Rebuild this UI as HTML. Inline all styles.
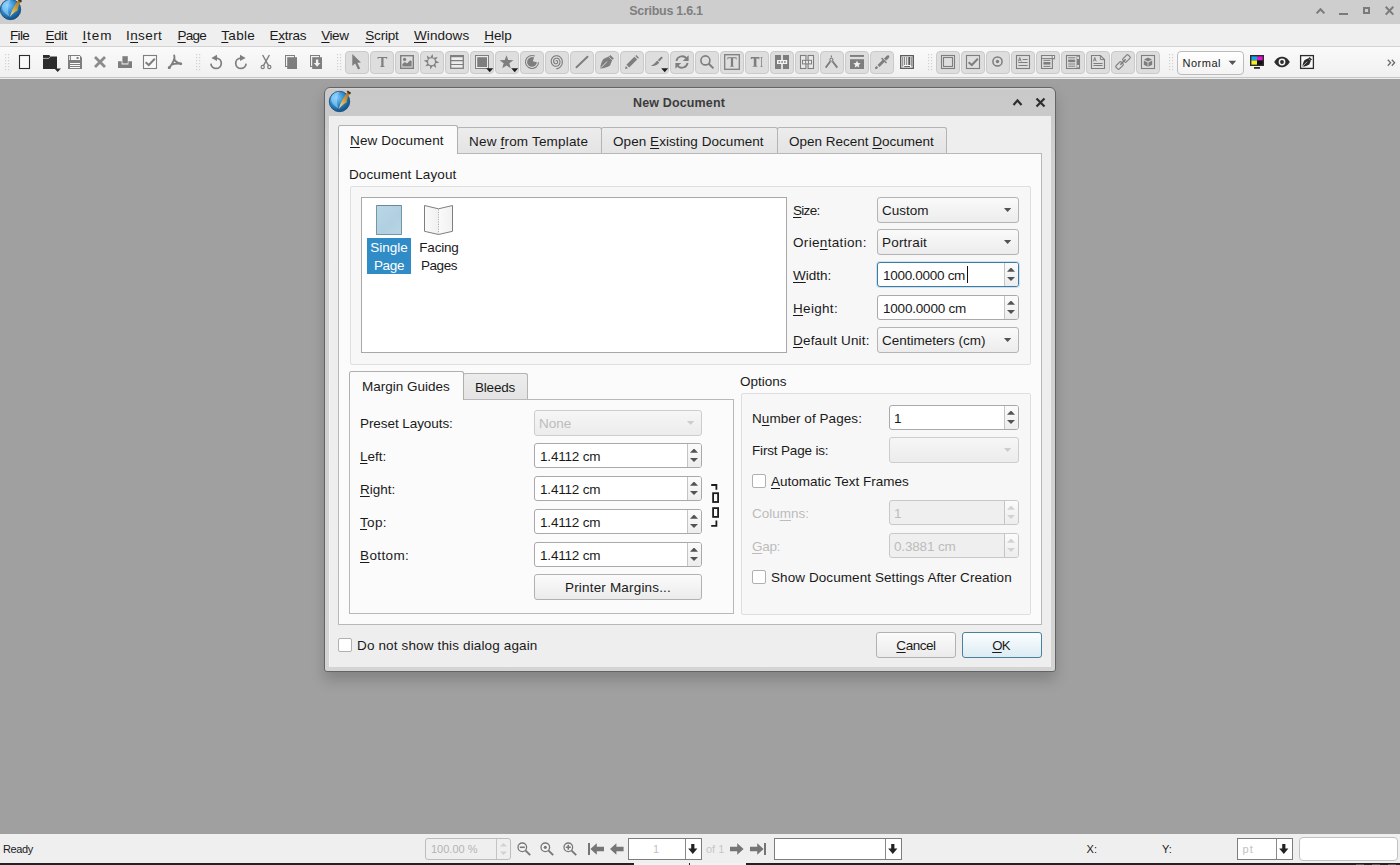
<!DOCTYPE html>
<html><head><meta charset="utf-8"><title>Scribus</title>
<style>
*{box-sizing:border-box;margin:0;padding:0}
html,body{width:1400px;height:865px;overflow:hidden}
body{position:relative;background:#a0a0a0;font-family:"Liberation Sans",sans-serif;font-size:13.5px;color:#1a1a1a}
.abs{position:absolute}
.t{position:absolute;white-space:nowrap;line-height:16px;height:16px}
u{text-decoration:underline;text-underline-offset:2px;text-decoration-thickness:1px}
#titlebar{position:absolute;left:0;top:0;width:1400px;height:24px;background:#cecece}
#menubar{position:absolute;left:0;top:24px;width:1400px;height:23px;background:#efefef;border-bottom:1px solid #d2d2d2}
#toolbar{position:absolute;left:0;top:47px;width:1400px;height:32px;background:linear-gradient(#fafafa,#f0f0f0);border-bottom:1px solid #ececec}
#toolbar:after{content:"";position:absolute;left:0;top:30px;width:1400px;height:1px;background:#c6c6c6}
.tbtn{width:24px;height:23px;border:1px solid #cacaca;border-radius:4px;background:#dedede}
#statusbar{position:absolute;left:0;top:834px;width:1400px;height:29px;background:#efefef}
#bottombar{position:absolute;left:0;top:863px;width:1400px;height:2px;background:#222}
#dialog{position:absolute;left:324px;top:87px;width:732px;height:585px;border:1px solid #646464;border-radius:6px 6px 3px 3px;background:linear-gradient(#d4d4d4,#d4d4d4 1px,#c9c9c9 2px,#cacaca 28px,#d0d0d0 60px,#d4d4d4);box-shadow:0 8px 14px rgba(0,0,0,.18)}
#dlgbody{position:absolute;left:329px;top:116px;width:722px;height:551px;background:#eeeeee;box-shadow:inset 1px 0 0 #f3f3f3}
.combo{position:absolute;height:26px;border:1px solid #b4b4b4;border-radius:3px;background:linear-gradient(#fafafa,#ececec)}
.combo .arr{position:absolute;right:6.7px;top:10px;width:7.4px;height:4.1px;background:#535353;clip-path:polygon(0 0,100% 0,50% 100%)}
.spin{position:absolute;height:25px;border:1px solid #a9a9a9;border-radius:3px;background:#fff}
.spin .sb{position:absolute;right:0;top:0;bottom:0;width:14px;border-left:1px solid #c4c4c4;background:linear-gradient(#fbfbfb,#ededed);border-radius:0 2px 2px 0}
.spin .up{position:absolute;right:3px;top:4.6px;width:8px;height:4.2px;background:#535353;clip-path:polygon(50% 0,100% 100%,0 100%)}
.spin .dn{position:absolute;right:3px;top:13.9px;width:8px;height:4.2px;background:#535353;clip-path:polygon(0 0,100% 0,50% 100%)}
.dis{color:#bcbcbc}
.cb{position:absolute;width:14px;height:14px;border:1px solid #b0b0b0;border-radius:2px;background:#fff}
.btn{position:absolute;border:1px solid #b1b1b1;border-radius:3px;background:linear-gradient(#fbfbfb,#ebebeb)}

.tab{border:1px solid #b4b4b4;border-bottom:none;border-radius:2.5px 2.5px 0 0;background:linear-gradient(#ececec,#e4e4e4)}
.tabsel{border:1px solid #b0b0b0;border-bottom:none;border-radius:2.5px 2.5px 0 0;background:#fbfbfb}
.grp{border:1px solid #dfdfdf;border-radius:2px;background:#f7f7f7}
.spin.focus{border-color:#3a7ca5;box-shadow:0 0 0 1px rgba(90,160,210,.25)}
.dcombo{border-color:#cdcdcd;background:linear-gradient(#f6f6f6,#ececec)}
.dcombo .arr{background:#cdcdcd}
.dspin{border-color:#c8c8c8;background:#efefef}
.dspin .up{background:#d2d2d2}
.dspin .dn{background:#d2d2d2}
.okbtn{border-color:#4b7f9c;background:linear-gradient(#fbfeff,#dcebf3)}
</style></head><body>
<div id="titlebar"></div>
<div id="menubar"></div>
<div id="toolbar"></div>
<div id="statusbar"></div>
<div id="bottombar"></div>
<!--CHROME-->
<div class="t" id="wtitle" style="left:566px;top:3px;width:200px;text-align:center;font-weight:bold;color:#7f7f7f;font-size:12.5px;letter-spacing:-0.28px">Scribus 1.6.1</div>
<svg class="abs" style="left:1315px;top:7px;overflow:visible" width="11" height="8" viewBox="0 0 11 8" ><path d="M1.6 6.4 L5.5 2.2 L9.4 6.4" fill="none" stroke="#7b7b7b" stroke-width="2"/></svg>
<div class="abs" style="left:1339px;top:13px;width:9px;height:2px;background:#7b7b7b"></div>
<div class="abs" style="left:1363px;top:7px;width:7px;height:7px;border:2px solid #7b7b7b"></div>
<svg class="abs" style="left:1384px;top:5px;overflow:visible" width="11" height="11" viewBox="0 0 11 11" ><path d="M1.7 1.8 L9.3 9.6 M9.3 1.8 L1.7 9.6" fill="none" stroke="#7b7b7b" stroke-width="2"/></svg>
<div class="abs" style="left:0;top:0;width:24px;height:24px;overflow:hidden" id="appic"></div>
<svg class="abs" style="left:0px;top:-2px;overflow:visible;z-index:0" width="23" height="23" viewBox="0 0 23 23"><defs><radialGradient id="gl0" cx="0.35" cy="0.3" r="0.8"><stop offset="0" stop-color="#86ccff"/><stop offset="0.45" stop-color="#348cce"/><stop offset="1" stop-color="#0b4478"/></radialGradient><linearGradient id="pn0" x1="0" y1="1" x2="1" y2="0"><stop offset="0" stop-color="#f6e7ae"/><stop offset="0.45" stop-color="#d2a544"/><stop offset="1" stop-color="#8a6222"/></linearGradient></defs><circle cx="10.5" cy="11.5" r="10.2" fill="url(#gl0)" stroke="#17507f" stroke-width="0.9"/><path d="M10.5 1.6 C7.5 7 7.2 13 9.6 18.6 C5 16 1.6 12 2 8.2 C3 4.5 6.5 2 10.5 1.6 Z" fill="#9ddcff" opacity="0.55"/><path d="M9.8 19 C11.5 13 14.5 6.5 19.2 1.2 L21.6 2.8 C19 6 17.8 9.4 17.6 12.6 C15 13.6 12.4 16 9.8 19 Z" fill="url(#pn0)"/><path d="M18.6 0.6 L22 2.8 L21 4.4 L17.8 2 Z" fill="#4a2f12"/></svg>
<svg class="abs" style="left:329px;top:90px;overflow:visible;z-index:5" width="23" height="23" viewBox="0 0 23 23"><defs><radialGradient id="gl329" cx="0.35" cy="0.3" r="0.8"><stop offset="0" stop-color="#86ccff"/><stop offset="0.45" stop-color="#348cce"/><stop offset="1" stop-color="#0b4478"/></radialGradient><linearGradient id="pn329" x1="0" y1="1" x2="1" y2="0"><stop offset="0" stop-color="#f6e7ae"/><stop offset="0.45" stop-color="#d2a544"/><stop offset="1" stop-color="#8a6222"/></linearGradient></defs><circle cx="10.5" cy="11.5" r="10.2" fill="url(#gl329)" stroke="#17507f" stroke-width="0.9"/><path d="M10.5 1.6 C7.5 7 7.2 13 9.6 18.6 C5 16 1.6 12 2 8.2 C3 4.5 6.5 2 10.5 1.6 Z" fill="#9ddcff" opacity="0.55"/><path d="M9.8 19 C11.5 13 14.5 6.5 19.2 1.2 L21.6 2.8 C19 6 17.8 9.4 17.6 12.6 C15 13.6 12.4 16 9.8 19 Z" fill="url(#pn329)"/><path d="M18.6 0.6 L22 2.8 L21 4.4 L17.8 2 Z" fill="#4a2f12"/></svg>
<div class="t" id="mFile" style="left:10px;top:28px;letter-spacing:-0.67px"><u>F</u>ile</div>
<div class="t" id="mEdit" style="left:45.4px;top:28px;letter-spacing:-0.4px"><u>E</u>dit</div>
<div class="t" id="mItem" style="left:82.4px;top:28px;letter-spacing:0.93px"><u>I</u>tem</div>
<div class="t" id="mInsert" style="left:126px;top:28px;letter-spacing:0.4px">I<u>n</u>sert</div>
<div class="t" id="mPage" style="left:177.5px;top:28px;letter-spacing:-0.73px"><u>P</u>age</div>
<div class="t" id="mTable" style="left:221.3px;top:28px;letter-spacing:0.3px"><u>T</u>able</div>
<div class="t" id="mExtras" style="left:269.5px;top:28px;letter-spacing:-0.24px">E<u>x</u>tras</div>
<div class="t" id="mView" style="left:321.3px;top:28px;letter-spacing:-0.47px"><u>V</u>iew</div>
<div class="t" id="mScript" style="left:365.3px;top:28px;letter-spacing:-0.2px"><u>S</u>cript</div>
<div class="t" id="mWindows" style="left:414px;top:28px;letter-spacing:0.07px"><u>W</u>indows</div>
<div class="t" id="mHelp" style="left:484.3px;top:28px;letter-spacing:-0.1px"><u>H</u>elp</div>
<svg class="abs" style="left:5px;top:54px;overflow:visible" width="5" height="17" viewBox="0 0 5 17" ><rect x="0" y="0" width="1.2" height="1.2" fill="#d0d0d0"/><rect x="0" y="3" width="1.2" height="1.2" fill="#d0d0d0"/><rect x="0" y="6" width="1.2" height="1.2" fill="#d0d0d0"/><rect x="0" y="9" width="1.2" height="1.2" fill="#d0d0d0"/><rect x="0" y="12" width="1.2" height="1.2" fill="#d0d0d0"/><rect x="0" y="15" width="1.2" height="1.2" fill="#d0d0d0"/><rect x="3" y="0" width="1.2" height="1.2" fill="#d0d0d0"/><rect x="3" y="3" width="1.2" height="1.2" fill="#d0d0d0"/><rect x="3" y="6" width="1.2" height="1.2" fill="#d0d0d0"/><rect x="3" y="9" width="1.2" height="1.2" fill="#d0d0d0"/><rect x="3" y="12" width="1.2" height="1.2" fill="#d0d0d0"/><rect x="3" y="15" width="1.2" height="1.2" fill="#d0d0d0"/></svg>
<svg class="abs" style="left:196px;top:54px;overflow:visible" width="5" height="17" viewBox="0 0 5 17" ><rect x="0" y="0" width="1.2" height="1.2" fill="#d0d0d0"/><rect x="0" y="3" width="1.2" height="1.2" fill="#d0d0d0"/><rect x="0" y="6" width="1.2" height="1.2" fill="#d0d0d0"/><rect x="0" y="9" width="1.2" height="1.2" fill="#d0d0d0"/><rect x="0" y="12" width="1.2" height="1.2" fill="#d0d0d0"/><rect x="0" y="15" width="1.2" height="1.2" fill="#d0d0d0"/><rect x="3" y="0" width="1.2" height="1.2" fill="#d0d0d0"/><rect x="3" y="3" width="1.2" height="1.2" fill="#d0d0d0"/><rect x="3" y="6" width="1.2" height="1.2" fill="#d0d0d0"/><rect x="3" y="9" width="1.2" height="1.2" fill="#d0d0d0"/><rect x="3" y="12" width="1.2" height="1.2" fill="#d0d0d0"/><rect x="3" y="15" width="1.2" height="1.2" fill="#d0d0d0"/></svg>
<svg class="abs" style="left:337px;top:54px;overflow:visible" width="5" height="17" viewBox="0 0 5 17" ><rect x="0" y="0" width="1.2" height="1.2" fill="#d0d0d0"/><rect x="0" y="3" width="1.2" height="1.2" fill="#d0d0d0"/><rect x="0" y="6" width="1.2" height="1.2" fill="#d0d0d0"/><rect x="0" y="9" width="1.2" height="1.2" fill="#d0d0d0"/><rect x="0" y="12" width="1.2" height="1.2" fill="#d0d0d0"/><rect x="0" y="15" width="1.2" height="1.2" fill="#d0d0d0"/><rect x="3" y="0" width="1.2" height="1.2" fill="#d0d0d0"/><rect x="3" y="3" width="1.2" height="1.2" fill="#d0d0d0"/><rect x="3" y="6" width="1.2" height="1.2" fill="#d0d0d0"/><rect x="3" y="9" width="1.2" height="1.2" fill="#d0d0d0"/><rect x="3" y="12" width="1.2" height="1.2" fill="#d0d0d0"/><rect x="3" y="15" width="1.2" height="1.2" fill="#d0d0d0"/></svg>
<svg class="abs" style="left:928px;top:54px;overflow:visible" width="5" height="17" viewBox="0 0 5 17" ><rect x="0" y="0" width="1.2" height="1.2" fill="#d0d0d0"/><rect x="0" y="3" width="1.2" height="1.2" fill="#d0d0d0"/><rect x="0" y="6" width="1.2" height="1.2" fill="#d0d0d0"/><rect x="0" y="9" width="1.2" height="1.2" fill="#d0d0d0"/><rect x="0" y="12" width="1.2" height="1.2" fill="#d0d0d0"/><rect x="0" y="15" width="1.2" height="1.2" fill="#d0d0d0"/><rect x="3" y="0" width="1.2" height="1.2" fill="#d0d0d0"/><rect x="3" y="3" width="1.2" height="1.2" fill="#d0d0d0"/><rect x="3" y="6" width="1.2" height="1.2" fill="#d0d0d0"/><rect x="3" y="9" width="1.2" height="1.2" fill="#d0d0d0"/><rect x="3" y="12" width="1.2" height="1.2" fill="#d0d0d0"/><rect x="3" y="15" width="1.2" height="1.2" fill="#d0d0d0"/></svg>
<svg class="abs" style="left:1169px;top:54px;overflow:visible" width="5" height="17" viewBox="0 0 5 17" ><rect x="0" y="0" width="1.2" height="1.2" fill="#d0d0d0"/><rect x="0" y="3" width="1.2" height="1.2" fill="#d0d0d0"/><rect x="0" y="6" width="1.2" height="1.2" fill="#d0d0d0"/><rect x="0" y="9" width="1.2" height="1.2" fill="#d0d0d0"/><rect x="0" y="12" width="1.2" height="1.2" fill="#d0d0d0"/><rect x="0" y="15" width="1.2" height="1.2" fill="#d0d0d0"/><rect x="3" y="0" width="1.2" height="1.2" fill="#d0d0d0"/><rect x="3" y="3" width="1.2" height="1.2" fill="#d0d0d0"/><rect x="3" y="6" width="1.2" height="1.2" fill="#d0d0d0"/><rect x="3" y="9" width="1.2" height="1.2" fill="#d0d0d0"/><rect x="3" y="12" width="1.2" height="1.2" fill="#d0d0d0"/><rect x="3" y="15" width="1.2" height="1.2" fill="#d0d0d0"/></svg>
<svg class="abs" style="left:17px;top:54px;overflow:visible" width="16" height="16" viewBox="0 0 16 16" ><rect x="2.5" y="1.5" width="10" height="13" fill="#fafafa" stroke="#2c2c2c" stroke-width="1.1"/></svg>
<svg class="abs" style="left:42px;top:54px;overflow:visible" width="16" height="16" viewBox="0 0 16 16" ><path d="M1 1 H7.2 L8.6 2.4 H15 V15 H1 Z" fill="#2c2c2c"/><path d="M1 4.4 H6.6 L8.6 2.4" fill="none" stroke="#e8e8e8" stroke-width="0.7"/><path d="M12.4 14.4 H19 L15.7 18 Z" fill="#2c2c2c"/></svg>
<svg class="abs" style="left:67px;top:54px;overflow:visible" width="16" height="16" viewBox="0 0 16 16" ><path d="M1 1 H12.6 L15 3.4 V15 H1 Z" fill="#7e7e7e"/><rect x="2.2" y="2" width="0.9" height="4" fill="#f6f6f6"/><rect x="4" y="2" width="9" height="4" fill="#f6f6f6"/><rect x="9.6" y="3" width="2" height="2" fill="#7e7e7e"/><rect x="3" y="9" width="10" height="1" fill="#fafafa"/><rect x="3" y="11" width="10" height="1" fill="#fafafa"/><rect x="3" y="13" width="10" height="1" fill="#fafafa"/></svg>
<svg class="abs" style="left:92px;top:54px;overflow:visible" width="16" height="16" viewBox="0 0 16 16" ><path d="M3 3 L13 13 M13 3 L3 13" fill="none" stroke="#8b8b8b" stroke-width="2.8"/></svg>
<svg class="abs" style="left:117px;top:54px;overflow:visible" width="16" height="16" viewBox="0 0 16 16" ><path d="M1 7.3 H4.6 V10.6 H11.4 V7.3 H15 V14 H1 Z" fill="#7e7e7e"/><rect x="5.4" y="2.2" width="5.4" height="7.2" fill="#7e7e7e"/></svg>
<svg class="abs" style="left:142px;top:54px;overflow:visible" width="16" height="16" viewBox="0 0 16 16" ><rect x="1.5" y="1.5" width="13" height="13" fill="#f9f9f9" stroke="#7e7e7e" stroke-width="1.1"/><path d="M3.6 8.2 L6.8 11 L12.8 4.8" fill="none" stroke="#7e7e7e" stroke-width="2"/></svg>
<svg class="abs" style="left:167px;top:54px;overflow:visible" width="16" height="16" viewBox="0 0 16 16" ><path d="M7.2 1.4 C7.8 3 7.5 4.8 6.7 6.6 C5.6 9.2 3.8 12.2 2 14 M7 5 C8.2 7.4 10 9 14.2 9.8 M4 11 C6.2 10 9 9.5 12.5 9.6" fill="none" stroke="#7e7e7e" stroke-width="1.9" stroke-linecap="round"/><circle cx="2.3" cy="13.6" r="1.5" fill="#7e7e7e"/><circle cx="13.6" cy="9.8" r="1.4" fill="#7e7e7e"/></svg>
<svg class="abs" style="left:208px;top:54px;overflow:visible" width="16" height="16" viewBox="0 0 16 16" ><path d="M8.6 4.1 A5.2 5.2 0 1 1 2.9 9.6" fill="none" stroke="#7e7e7e" stroke-width="1.7"/><path d="M3.4 3.9 L9 0.7 V7.1 Z" fill="#7e7e7e"/></svg>
<svg class="abs" style="left:233px;top:54px;overflow:visible" width="16" height="16" viewBox="0 0 16 16" ><g transform="translate(16,0) scale(-1,1)"><path d="M8.6 4.1 A5.2 5.2 0 1 1 2.9 9.6" fill="none" stroke="#7e7e7e" stroke-width="1.7"/><path d="M3.4 3.9 L9 0.7 V7.1 Z" fill="#7e7e7e"/></g></svg>
<svg class="abs" style="left:258px;top:54px;overflow:visible" width="16" height="16" viewBox="0 0 16 16" ><path d="M4.6 1 L10.4 11.4 M11.4 1 L5.6 11.4" fill="none" stroke="#7e7e7e" stroke-width="1.4"/><circle cx="4.7" cy="13" r="1.6" fill="none" stroke="#7e7e7e" stroke-width="1.2"/><circle cx="11.3" cy="13" r="1.6" fill="none" stroke="#7e7e7e" stroke-width="1.2"/></svg>
<svg class="abs" style="left:283px;top:54px;overflow:visible" width="16" height="16" viewBox="0 0 16 16" ><rect x="2.5" y="1.5" width="9" height="11" fill="#f2f2f2" stroke="#7e7e7e" stroke-width="1"/><rect x="4.2" y="3.2" width="9.8" height="11.8" fill="#7e7e7e"/></svg>
<svg class="abs" style="left:308px;top:54px;overflow:visible" width="16" height="16" viewBox="0 0 16 16" ><rect x="2.5" y="1.5" width="9" height="11" fill="#f2f2f2" stroke="#7e7e7e" stroke-width="1"/><rect x="4.2" y="3.2" width="9.8" height="11.8" fill="#7e7e7e"/><path d="M7.9 5.6 H10.3 V9 H12.4 L9.1 12.8 L5.8 9 H7.9 Z" fill="#f2f2f2"/></svg>
<div class="abs tbtn" style="left:345px;top:51px"></div>
<div class="abs tbtn" style="left:370px;top:51px"></div>
<div class="abs tbtn" style="left:395px;top:51px"></div>
<div class="abs tbtn" style="left:420px;top:51px"></div>
<div class="abs tbtn" style="left:445px;top:51px"></div>
<div class="abs tbtn" style="left:470px;top:51px"></div>
<div class="abs tbtn" style="left:495px;top:51px"></div>
<div class="abs tbtn" style="left:520px;top:51px"></div>
<div class="abs tbtn" style="left:545px;top:51px"></div>
<div class="abs tbtn" style="left:570px;top:51px"></div>
<div class="abs tbtn" style="left:595px;top:51px"></div>
<div class="abs tbtn" style="left:620px;top:51px"></div>
<div class="abs tbtn" style="left:645px;top:51px"></div>
<div class="abs tbtn" style="left:670px;top:51px"></div>
<div class="abs tbtn" style="left:695px;top:51px"></div>
<div class="abs tbtn" style="left:720px;top:51px"></div>
<div class="abs tbtn" style="left:745px;top:51px"></div>
<div class="abs tbtn" style="left:770px;top:51px"></div>
<div class="abs tbtn" style="left:795px;top:51px"></div>
<div class="abs tbtn" style="left:820px;top:51px"></div>
<div class="abs tbtn" style="left:845px;top:51px"></div>
<div class="abs tbtn" style="left:870px;top:51px"></div>
<div class="abs tbtn" style="left:936px;top:51px"></div>
<div class="abs tbtn" style="left:961px;top:51px"></div>
<div class="abs tbtn" style="left:986px;top:51px"></div>
<div class="abs tbtn" style="left:1011px;top:51px"></div>
<div class="abs tbtn" style="left:1036px;top:51px"></div>
<div class="abs tbtn" style="left:1061px;top:51px"></div>
<div class="abs tbtn" style="left:1086px;top:51px"></div>
<div class="abs tbtn" style="left:1111px;top:51px"></div>
<div class="abs tbtn" style="left:1136px;top:51px"></div>
<svg class="abs" style="left:349px;top:54px;overflow:visible" width="16" height="16" viewBox="0 0 16 16" ><path d="M3.3 0 V12 L6.2 9.6 L9 15.6 L11.2 14.6 L8.4 8.8 L12 8.4 Z" fill="#7e7e7e"/></svg>
<svg class="abs" style="left:374px;top:54px;overflow:visible" width="16" height="16" viewBox="0 0 16 16" ><path d="M3.6 3 H13.2 V5 H12.7 C12.5 4.2 12.2 4 11.4 4 H9.5 V11.6 C9.5 12.3 9.8 12.5 10.8 12.6 V13 H6 V12.6 C7 12.5 7.3 12.3 7.3 11.6 V4 H5.4 C4.6 4 4.3 4.2 4.1 5 H3.6 Z" fill="#7e7e7e"/></svg>
<svg class="abs" style="left:399px;top:54px;overflow:visible" width="16" height="16" viewBox="0 0 16 16" ><rect x="1.7" y="1.7" width="12.6" height="12.6" fill="none" stroke="#7e7e7e" stroke-width="1.4"/><circle cx="5.6" cy="5.4" r="1.6" fill="#7e7e7e"/><path d="M3.4 12.6 V10 L5.8 8 L8 9.6 L11.2 6.2 L12.6 7 V12.6 Z" fill="#7e7e7e"/></svg>
<svg class="abs" style="left:424px;top:54px;overflow:visible" width="16" height="16" viewBox="0 0 16 16" ><g transform="translate(-0.5,-0.3)"><circle cx="8" cy="8" r="4" fill="none" stroke="#7e7e7e" stroke-width="1.1"/><path d="M6.9 3.6 L9.1 0.3 L9.6 3.9 Z" fill="#7e7e7e" transform="rotate(0 8 8)"/><path d="M6.9 3.6 L9.1 0.3 L9.6 3.9 Z" fill="#7e7e7e" transform="rotate(45 8 8)"/><path d="M6.9 3.6 L9.1 0.3 L9.6 3.9 Z" fill="#7e7e7e" transform="rotate(90 8 8)"/><path d="M6.9 3.6 L9.1 0.3 L9.6 3.9 Z" fill="#7e7e7e" transform="rotate(135 8 8)"/><path d="M6.9 3.6 L9.1 0.3 L9.6 3.9 Z" fill="#7e7e7e" transform="rotate(180 8 8)"/><path d="M6.9 3.6 L9.1 0.3 L9.6 3.9 Z" fill="#7e7e7e" transform="rotate(225 8 8)"/><path d="M6.9 3.6 L9.1 0.3 L9.6 3.9 Z" fill="#7e7e7e" transform="rotate(270 8 8)"/><path d="M6.9 3.6 L9.1 0.3 L9.6 3.9 Z" fill="#7e7e7e" transform="rotate(315 8 8)"/></g></svg>
<svg class="abs" style="left:449px;top:54px;overflow:visible" width="16" height="16" viewBox="0 0 16 16" ><rect x="1.7" y="1.7" width="12.6" height="12.6" fill="#ececec" stroke="#7e7e7e" stroke-width="1.3"/><path d="M1.7 2.2 H14.3" stroke="#7e7e7e" stroke-width="2"/><path d="M1.7 6.7 H14.3 M1.7 10.5 H14.3" stroke="#7e7e7e" stroke-width="1.2"/></svg>
<svg class="abs" style="left:474px;top:54px;overflow:visible" width="16" height="16" viewBox="0 0 16 16" ><rect x="1.5" y="1.5" width="13" height="13" fill="#ebebeb" stroke="#7e7e7e" stroke-width="1"/><rect x="3.2" y="3.2" width="9.8" height="9.8" fill="#7e7e7e"/><path d="M12.2 14.2 H19.2 L15.7 18.2 Z" fill="#1e1e1e"/></svg>
<svg class="abs" style="left:499px;top:54px;overflow:visible" width="16" height="16" viewBox="0 0 16 16" ><polygon points="7.50,1.20 9.26,5.97 14.35,6.18 10.35,9.33 11.73,14.22 7.50,11.40 3.27,14.22 4.65,9.33 0.65,6.18 5.74,5.97" fill="#7e7e7e"/><path d="M12.2 14.2 H19.2 L15.7 18.2 Z" fill="#1e1e1e"/></svg>
<svg class="abs" style="left:524px;top:54px;overflow:visible" width="16" height="16" viewBox="0 0 16 16" ><path d="M10.8 2.1 A6.5 6.5 0 1 0 14.5 8.2" fill="none" stroke="#7e7e7e" stroke-width="1.1"/><path d="M8.8 7.2 L10.1 3.5 A4.9 4.9 0 1 0 12.9 8.2 Z" fill="#7e7e7e"/></svg>
<svg class="abs" style="left:549px;top:54px;overflow:visible" width="16" height="16" viewBox="0 0 16 16" ><polyline points="6.85,7.09 6.89,6.99 6.96,6.90 7.04,6.82 7.13,6.75 7.24,6.70 7.37,6.66 7.50,6.64 7.65,6.64 7.79,6.67 7.94,6.73 8.09,6.81 8.22,6.91 8.35,7.04 8.46,7.20 8.55,7.37 8.61,7.57 8.65,7.78 8.67,8.00 8.65,8.23 8.60,8.46 8.52,8.68 8.40,8.90 8.25,9.11 8.08,9.29 7.87,9.45 7.64,9.58 7.39,9.68 7.12,9.74 6.83,9.76 6.54,9.74 6.25,9.68 5.97,9.57 5.69,9.41 5.44,9.21 5.20,8.97 5.00,8.70 4.83,8.39 4.70,8.05 4.62,7.69 4.58,7.31 4.59,6.92 4.66,6.53 4.77,6.15 4.94,5.78 5.16,5.44 5.42,5.12 5.73,4.84 6.08,4.60 6.46,4.42 6.87,4.29 7.30,4.22 7.74,4.21 8.19,4.27 8.62,4.39 9.05,4.58 9.45,4.83 9.82,5.15 10.16,5.52 10.44,5.94 10.67,6.40 10.84,6.91 10.95,7.43 10.99,7.98 10.95,8.53 10.84,9.08 10.67,9.62 10.42,10.13 10.10,10.61 9.72,11.04 9.28,11.42 8.79,11.73 8.26,11.97 7.70,12.14 7.11,12.22 6.51,12.22 5.91,12.13 5.32,11.95 4.75,11.69 4.22,11.34 3.73,10.91 3.30,10.41 2.93,9.85 2.63,9.23 2.42,8.57 2.29,7.87 2.25,7.16 2.30,6.44 2.44,5.73 2.68,5.03 3.01,4.38 3.43,3.77 3.92,3.22 4.49,2.74 5.12,2.34 5.79,2.04 6.51,1.84 7.26,1.74 8.02,1.75 8.77,1.87 9.51,2.10 10.22,2.43 10.89,2.88 11.50,3.41 12.03,4.04 12.49,4.74 12.86,5.51 13.12,6.33 13.28,7.19 13.32,8.08 13.26,8.96 13.07,9.84 12.78,10.69 12.37,11.50 11.86,12.24 11.26,12.91 10.57,13.49 9.80,13.97 8.97,14.34 8.10,14.58 7.20,14.70" fill="none" stroke="#7e7e7e" stroke-width="1.15"/></svg>
<svg class="abs" style="left:574px;top:54px;overflow:visible" width="16" height="16" viewBox="0 0 16 16" ><path d="M2.5 13.3 L13.5 2.7" fill="none" stroke="#7e7e7e" stroke-width="1.9" stroke-linecap="round"/></svg>
<svg class="abs" style="left:599px;top:54px;overflow:visible" width="16" height="16" viewBox="0 0 16 16" ><path d="M1.2 14.4 C1.5 10.6 2.6 7.4 4.4 5 L10.2 2.3 L11.3 0.9 L14.9 4.5 L13.5 5.6 L11 11.4 C8.4 13.2 5.2 14.2 1.2 14.4 Z" fill="#7e7e7e"/><path d="M1.8 13.8 L8 7.6" stroke="#e4e4e4" stroke-width="0.9"/><path d="M10.1 3.1 L12.9 5.9" stroke="#e4e4e4" stroke-width="0.7"/></svg>
<svg class="abs" style="left:624px;top:54px;overflow:visible" width="16" height="16" viewBox="0 0 16 16" ><path d="M2.4 10.8 L10.4 2.8 L13.2 5.6 L5.2 13.6 Z" fill="#7e7e7e"/><path d="M11.3 2 L12.3 1 L15 3.7 L14 4.7 Z" fill="#7e7e7e"/><path d="M1 15 L1.7 11.9 L4.1 14.3 Z" fill="#7e7e7e"/></svg>
<svg class="abs" style="left:649px;top:54px;overflow:visible" width="16" height="16" viewBox="0 0 16 16" ><path d="M2 11.8 C4.5 10.6 6.6 8.8 8.2 6.6 L10.2 8.4 C8.6 11 5.2 12.6 2 11.8 Z" fill="#7e7e7e"/><path d="M8.9 6.1 L12.4 2.4 L13.9 3.8 L10.3 7.5 Z" fill="#7e7e7e"/><path d="M12.2 14.2 H19.2 L15.7 18.2 Z" fill="#1e1e1e"/></svg>
<svg class="abs" style="left:674px;top:54px;overflow:visible" width="16" height="16" viewBox="0 0 16 16" ><path d="M2.4 7 A5.8 5.8 0 0 1 12.4 4.2" fill="none" stroke="#7e7e7e" stroke-width="1.8"/><path d="M14.6 1.2 V7 H8.8 Z" fill="#7e7e7e"/><path d="M13.6 9 A5.8 5.8 0 0 1 3.6 11.8" fill="none" stroke="#7e7e7e" stroke-width="1.8"/><path d="M1.4 14.8 V9 H7.2 Z" fill="#7e7e7e"/></svg>
<svg class="abs" style="left:699px;top:54px;overflow:visible" width="16" height="16" viewBox="0 0 16 16" ><circle cx="6.4" cy="6.4" r="4.5" fill="none" stroke="#7e7e7e" stroke-width="1.6"/><path d="M9.8 9.8 L14.4 14.4" stroke="#7e7e7e" stroke-width="2"/></svg>
<svg class="abs" style="left:724px;top:54px;overflow:visible" width="16" height="16" viewBox="0 0 16 16" ><rect x="0.7" y="0.7" width="14.6" height="14.6" fill="none" stroke="#7e7e7e" stroke-width="1.3"/><path d="M3.4 3.2 H12.6 V5.4 H12.1 C11.9 4.5 11.6 4.3 10.8 4.3 H9.1 V11.4 C9.1 12.1 9.4 12.3 10.4 12.4 V12.8 H5.6 V12.4 C6.6 12.3 6.9 12.1 6.9 11.4 V4.3 H5.2 C4.4 4.3 4.1 4.5 3.9 5.4 H3.4 Z" fill="#7e7e7e"/></svg>
<svg class="abs" style="left:749px;top:54px;overflow:visible" width="16" height="16" viewBox="0 0 16 16" ><path d="M1.8 3.1 H10.4 V5.3 H9.9 C9.7 4.6 9.4 4.4 8.7 4.4 H7.4 V11.2 C7.4 11.9 7.7 12.2 8.6 12.3 V12.8 H3.6 V12.3 C4.5 12.2 4.8 11.9 4.8 11.2 V4.4 H3.5 C2.8 4.4 2.5 4.6 2.3 5.3 H1.8 Z" fill="#7e7e7e"/><path d="M12.5 3.3 V12.9 M11.5 3.5 H13.5 M11.5 12.5 H13.5" stroke="#8c8c8c" stroke-width="0.9" fill="none"/></svg>
<svg class="abs" style="left:774px;top:54px;overflow:visible" width="16" height="16" viewBox="0 0 16 16" ><rect x="1" y="1" width="6" height="14" fill="#7e7e7e"/><rect x="9" y="1" width="6" height="14" fill="#7e7e7e"/><rect x="3" y="6" width="10.2" height="4" fill="#f4f4f4"/><rect x="4.5" y="7.2" width="1.6" height="1.6" fill="#7e7e7e"/><rect x="7.3" y="7.2" width="1.6" height="1.6" fill="#7e7e7e"/><rect x="10.1" y="7.2" width="1.6" height="1.6" fill="#7e7e7e"/></svg>
<svg class="abs" style="left:799px;top:54px;overflow:visible" width="16" height="16" viewBox="0 0 16 16" ><rect x="1.5" y="1.5" width="5.4" height="13" fill="#e8e8e8" stroke="#7e7e7e" stroke-width="1.1"/><rect x="9.1" y="1.5" width="5.4" height="13" fill="#e8e8e8" stroke="#7e7e7e" stroke-width="1.1"/><rect x="3.5" y="6.3" width="9" height="3.6" fill="#ececec" stroke="#7e7e7e" stroke-width="1"/><path d="M6.6 6.3 V9.9 M9.4 6.3 V9.9" stroke="#7e7e7e" stroke-width="1"/></svg>
<svg class="abs" style="left:824px;top:54px;overflow:visible" width="16" height="16" viewBox="0 0 16 16" ><path d="M6.3 7.4 L1.7 13.6 M8.5 7.4 L13.3 13.6" stroke="#7e7e7e" stroke-width="1.8" fill="none"/><circle cx="7.4" cy="5.8" r="1.5" fill="#e4e4e4" stroke="#7e7e7e" stroke-width="1.1"/><path d="M7.4 1.4 V3.6" stroke="#7e7e7e" stroke-width="1.2"/></svg>
<svg class="abs" style="left:849px;top:54px;overflow:visible" width="16" height="16" viewBox="0 0 16 16" ><rect x="1" y="1" width="14" height="1.9" fill="#7e7e7e"/><rect x="1" y="5.2" width="14" height="9.8" fill="#7e7e7e"/><polygon points="8.00,6.50 9.06,8.94 11.71,9.19 9.71,10.96 10.29,13.56 8.00,12.20 5.71,13.56 6.29,10.96 4.29,9.19 6.94,8.94" fill="#f0f0f0"/></svg>
<svg class="abs" style="left:874px;top:54px;overflow:visible" width="16" height="16" viewBox="0 0 16 16" ><path d="M1.1 14.9 V13.2 L2.5 11.9 L4.1 13.5 L2.8 14.9 Z" fill="#7e7e7e"/><path d="M3.5 11.1 L9 5.6 L11 7.6 L5.5 13.1 Z" fill="#7e7e7e"/><path d="M7 4.4 L8 3.4 L13 8.4 L12 9.4 Z" fill="#7e7e7e"/><path d="M10 4.6 L12.6 2 C13.4 1.2 14.4 1.2 15 1.8 C15.6 2.4 15.4 3.4 14.6 4.2 L12 6.8 Z" fill="#7e7e7e"/></svg>
<svg class="abs" style="left:899px;top:54px;overflow:visible" width="16" height="16" viewBox="0 0 16 16" ><rect x="1.7" y="1.7" width="12.6" height="12.6" fill="#fbfbfb" stroke="#555" stroke-width="1.3"/><rect x="3.4" y="3" width="0.8" height="9.6" fill="#555"/><rect x="5.3" y="3" width="0.8" height="8" fill="#555"/><rect x="7.4" y="3" width="0.8" height="8" fill="#555"/><rect x="9.3" y="3" width="2" height="8" fill="#555"/><rect x="12.4" y="3" width="0.8" height="9.6" fill="#555"/><rect x="5.2" y="12" width="5.8" height="0.9" fill="#555"/></svg>
<svg class="abs" style="left:940px;top:54px;overflow:visible" width="16" height="16" viewBox="0 0 16 16" ><rect x="1.5" y="1.5" width="13" height="13" fill="none" stroke="#7e7e7e" stroke-width="1.1"/><rect x="3.5" y="3.5" width="9" height="9" fill="none" stroke="#7e7e7e" stroke-width="1.1"/></svg>
<svg class="abs" style="left:965px;top:54px;overflow:visible" width="16" height="16" viewBox="0 0 16 16" ><rect x="1.5" y="1.5" width="13" height="13" fill="none" stroke="#7e7e7e" stroke-width="1.1"/><path d="M3.6 8.2 L6.8 11 L12.8 4.8" fill="none" stroke="#7e7e7e" stroke-width="2"/></svg>
<svg class="abs" style="left:990px;top:54px;overflow:visible" width="16" height="16" viewBox="0 0 16 16" ><circle cx="7.5" cy="7.5" r="4.6" fill="none" stroke="#7e7e7e" stroke-width="1.5"/><circle cx="7.5" cy="7.5" r="1.7" fill="#7e7e7e"/></svg>
<svg class="abs" style="left:1015px;top:54px;overflow:visible" width="16" height="16" viewBox="0 0 16 16" ><rect x="1.5" y="1.5" width="13" height="13" fill="none" stroke="#7e7e7e" stroke-width="1.1"/><path d="M3.4 7.4 L4.8 3.4 L6.2 7.4 M3.9 6 H5.7" fill="none" stroke="#7e7e7e" stroke-width="0.9"/><path d="M7.6 5.5 H12.6 M3.4 8.5 H12.6 M3.4 11.5 H12.6" stroke="#7e7e7e" stroke-width="1"/></svg>
<svg class="abs" style="left:1040px;top:54px;overflow:visible" width="16" height="16" viewBox="0 0 16 16" ><path d="M1.5 1.5 H14.5 V4.6 H12.4 V14.5 H1.5 Z" fill="none" stroke="#7e7e7e" stroke-width="1.1"/><path d="M1.5 4.6 H12.4" stroke="#7e7e7e" stroke-width="1"/><rect x="12.2" y="1.5" width="2.3" height="3.1" fill="#f2f2f2" stroke="#7e7e7e" stroke-width="0.9"/><rect x="3.4" y="8" width="7" height="2.6" fill="#7e7e7e"/><path d="M3.4 6.4 H10.4 M3.4 12.4 H10.4" stroke="#7e7e7e" stroke-width="1"/></svg>
<svg class="abs" style="left:1065px;top:54px;overflow:visible" width="16" height="16" viewBox="0 0 16 16" ><rect x="1.5" y="1.5" width="13" height="13" fill="none" stroke="#7e7e7e" stroke-width="1.1"/><rect x="11.6" y="1.5" width="2.9" height="13" fill="#7e7e7e"/><rect x="12.3" y="2.6" width="1.5" height="2.4" fill="#f2f2f2"/><rect x="12.3" y="11" width="1.5" height="2.4" fill="#f2f2f2"/><rect x="3.2" y="5.6" width="7" height="2.6" fill="#7e7e7e"/><path d="M3.2 3.8 H10.2 M3.2 10 H10.2 M3.2 12.2 H10.2" stroke="#7e7e7e" stroke-width="1"/></svg>
<svg class="abs" style="left:1090px;top:54px;overflow:visible" width="16" height="16" viewBox="0 0 16 16" ><path d="M1.5 1.5 H10.4 L14.5 5.6 V14.5 H1.5 Z" fill="none" stroke="#7e7e7e" stroke-width="1.1"/><path d="M10.4 1.5 V5.6 H14.5" fill="none" stroke="#7e7e7e" stroke-width="1"/><path d="M3.4 7.4 L4.8 3.4 L6.2 7.4 M3.9 6 H5.7" fill="none" stroke="#7e7e7e" stroke-width="0.9"/><path d="M3.4 9.5 H12.6 M3.4 11.5 H12.6" stroke="#7e7e7e" stroke-width="1"/></svg>
<svg class="abs" style="left:1115px;top:54px;overflow:visible" width="16" height="16" viewBox="0 0 16 16" ><g transform="rotate(-45 8 8)" fill="none" stroke="#7e7e7e" stroke-width="1.2"><rect x="-0.6" y="5.7" width="7.4" height="4.6" rx="1.2"/><rect x="9.2" y="5.7" width="7.4" height="4.6" rx="1.2"/><path d="M4.2 8 H11.8" stroke-width="1.5"/></g></svg>
<svg class="abs" style="left:1140px;top:54px;overflow:visible" width="16" height="16" viewBox="0 0 16 16" ><rect x="1.5" y="1.5" width="13" height="13" fill="none" stroke="#7e7e7e" stroke-width="1.1"/><path d="M8 3.6 L12 5.6 L8 7.6 L4 5.6 Z" fill="#7e7e7e"/><path d="M3.8 6.6 L7.6 8.5 V12.8 L3.8 10.8 Z" fill="#7e7e7e"/><path d="M12.2 6.6 L8.4 8.5 V12.8 L12.2 10.8 Z" fill="#7e7e7e"/></svg>
<div class="abs" style="left:1177px;top:51px;width:67px;height:24px;border:1px solid #bcbcbc;border-radius:4px;background:linear-gradient(#ffffff,#f3f3f3)"></div>
<div class="t" id="cbNormal" style="left:1182.5px;top:55px;font-size:11px;letter-spacing:0.5px">Normal</div>
<svg class="abs" style="left:1228px;top:60px;overflow:visible" width="9" height="6" viewBox="0 0 9 6" ><path d="M0.6 0.8 H8.2 L4.4 5 Z" fill="#555"/></svg>
<svg class="abs" style="left:1249px;top:54px;overflow:visible" width="16" height="16" viewBox="0 0 16 16" ><rect x="1" y="1" width="14" height="11" fill="#2c2c2c"/><rect x="2.4" y="2.4" width="5.6" height="4.1" fill="#11a6e8"/><rect x="8" y="2.4" width="5.6" height="4.1" fill="#e611d2"/><rect x="2.4" y="6.5" width="5.6" height="4.1" fill="#f4ee22"/><rect x="8" y="6.5" width="5.6" height="4.1" fill="#111"/><rect x="5" y="13" width="6" height="1.8" fill="#2c2c2c"/></svg>
<svg class="abs" style="left:1274px;top:54px;overflow:visible" width="16" height="16" viewBox="0 0 16 16" ><path d="M0.2 8 C3 3.6 5.6 2.8 8 2.8 C10.4 2.8 13 3.6 15.8 8 C13 12.4 10.4 13.2 8 13.2 C5.6 13.2 3 12.4 0.2 8 Z" fill="#2c2c2c"/><circle cx="8" cy="8" r="3.4" fill="#f4f4f4"/><circle cx="8" cy="8" r="1.9" fill="#2c2c2c"/></svg>
<svg class="abs" style="left:1299px;top:54px;overflow:visible" width="16" height="16" viewBox="0 0 16 16" ><rect x="1.6" y="1.6" width="12.8" height="12.8" fill="#fafafa" stroke="#2c2c2c" stroke-width="1.3"/><g transform="translate(2.6,2.4) scale(0.7)"><path d="M1.2 14.4 C1.5 10.6 2.6 7.4 4.4 5 L10.2 2.3 L11.3 0.9 L14.9 4.5 L13.5 5.6 L11 11.4 C8.4 13.2 5.2 14.2 1.2 14.4 Z" fill="#2c2c2c"/><path d="M1.8 13.8 L8 7.6" stroke="#fafafa" stroke-width="0.9"/><path d="M10.1 3.1 L12.9 5.9" stroke="#fafafa" stroke-width="0.7"/></g></svg>
<svg class="abs" style="left:1387px;top:58.6px;overflow:visible" width="9" height="8" viewBox="0 0 9 8" ><path d="M0.8 0.8 L3.6 3.8 L0.8 6.8 M4.8 0.8 L7.6 3.8 L4.8 6.8" fill="none" stroke="#6c6c6c" stroke-width="1.3"/></svg>
<div class="t" id="sReady" style="left:3px;top:841px;font-size:11px;letter-spacing:-0.38px">Ready</div>
<div class="abs" style="left:425px;top:838px;width:86px;height:22px;border:1px solid #bdbdbd;border-radius:3px;background:#efefef"></div>
<div class="abs" style="left:496px;top:839px;width:1px;height:20px;background:#c4c4c4"></div>
<svg class="abs" style="left:499px;top:842px;overflow:visible" width="9" height="14" viewBox="0 0 9 14" ><path d="M1 4.6 L4.5 1 L8 4.6 Z M1 9.4 L4.5 13 L8 9.4 Z" fill="#d2d2d2"/></svg>
<div class="t" id="sZoom" style="left:431px;top:841px;font-size:11px;color:#b4b4b4">100.00 %</div>
<svg class="abs" style="left:517px;top:842px;overflow:visible" width="14" height="14" viewBox="0 0 14 14" ><circle cx="5.3" cy="5.3" r="4.3" fill="#f4f4f4" stroke="#777" stroke-width="1.3"/><path d="M8.6 8.6 L13.2 13.2" stroke="#777" stroke-width="1.9"/><path d="M2.8 5.3 H7.8" stroke="#777" stroke-width="1.6"/></svg>
<svg class="abs" style="left:540px;top:842px;overflow:visible" width="14" height="14" viewBox="0 0 14 14" ><circle cx="5.3" cy="5.3" r="4.3" fill="#f4f4f4" stroke="#777" stroke-width="1.3"/><path d="M8.6 8.6 L13.2 13.2" stroke="#777" stroke-width="1.9"/><circle cx="5.3" cy="5.3" r="1.6" fill="#777"/></svg>
<svg class="abs" style="left:563px;top:842px;overflow:visible" width="14" height="14" viewBox="0 0 14 14" ><circle cx="5.3" cy="5.3" r="4.3" fill="#f4f4f4" stroke="#777" stroke-width="1.3"/><path d="M8.6 8.6 L13.2 13.2" stroke="#777" stroke-width="1.9"/><path d="M2.8 5.3 H7.8 M5.3 2.8 V7.8" stroke="#777" stroke-width="1.6"/></svg>
<svg class="abs" style="left:588px;top:843px;overflow:visible" width="16" height="12" viewBox="0 0 16 12" ><rect x="0" y="0" width="2" height="12" fill="#757575"/><g transform="translate(2.4,0)"><path d="M0 6 L6.4 0.2 V3.8 H13.6 V8.2 H6.4 V11.8 Z" fill="#757575"/></g></svg>
<svg class="abs" style="left:610px;top:843px;overflow:visible" width="14" height="12" viewBox="0 0 14 12" ><path d="M0 6 L6.4 0.2 V3.8 H13.6 V8.2 H6.4 V11.8 Z" fill="#757575"/></svg>
<svg class="abs" style="left:730px;top:843px;overflow:visible" width="14" height="12" viewBox="0 0 14 12" ><g transform="translate(13.6,0) scale(-1,1)"><path d="M0 6 L6.4 0.2 V3.8 H13.6 V8.2 H6.4 V11.8 Z" fill="#757575"/></g></svg>
<svg class="abs" style="left:750px;top:843px;overflow:visible" width="16" height="12" viewBox="0 0 16 12" ><g transform="translate(13.6,0) scale(-1,1)"><path d="M0 6 L6.4 0.2 V3.8 H13.6 V8.2 H6.4 V11.8 Z" fill="#757575"/></g><rect x="14" y="0" width="2" height="12" fill="#757575"/></svg>
<div class="abs" style="left:628px;top:838px;width:74px;height:22px;border:1px solid #7d7d7d;background:#fff"></div>
<div class="abs" style="left:685px;top:839px;width:1px;height:20px;background:#8a8a8a"></div>
<svg class="abs" style="left:688px;top:844px;overflow:visible" width="10" height="10" viewBox="0 0 10 10" ><path d="M3.2 0 H6.4 V4.6 H9.4 L4.8 10 L0.2 4.6 H3.2 Z" fill="#222"/></svg>
<div class="abs" style="left:774px;top:838px;width:128px;height:22px;border:1px solid #7d7d7d;background:#fff"></div>
<div class="abs" style="left:885px;top:839px;width:1px;height:20px;background:#8a8a8a"></div>
<svg class="abs" style="left:888px;top:844px;overflow:visible" width="10" height="10" viewBox="0 0 10 10" ><path d="M3.2 0 H6.4 V4.6 H9.4 L4.8 10 L0.2 4.6 H3.2 Z" fill="#222"/></svg>
<div class="abs" style="left:1237px;top:838px;width:56px;height:22px;border:1px solid #7d7d7d;background:#fff"></div>
<div class="abs" style="left:1276px;top:839px;width:1px;height:20px;background:#8a8a8a"></div>
<svg class="abs" style="left:1279px;top:844px;overflow:visible" width="10" height="10" viewBox="0 0 10 10" ><path d="M3.2 0 H6.4 V4.6 H9.4 L4.8 10 L0.2 4.6 H3.2 Z" fill="#222"/></svg>
<div class="t" id="sPg" style="left:653px;top:841px;font-size:11px;color:#c2c2c2">1</div>
<div class="t" id="sOf" style="left:706px;top:841px;font-size:11px;color:#c6c6c6">of 1</div>
<div class="t" id="sX" style="left:1086.6px;top:841px;font-size:11px">X:</div>
<div class="t" id="sY" style="left:1162px;top:841px;font-size:11px">Y:</div>
<div class="t" id="sPt" style="left:1242.5px;top:841px;font-size:11px;letter-spacing:1.2px;color:#c2c2c2">pt</div>
<div class="abs" style="left:1299px;top:837px;width:99px;height:24px;border:1px solid #c2c2c2;border-radius:4px;background:#fff"></div>
<div class="abs" style="left:634px;top:863px;width:55px;height:2px;background:#f2f2f2"></div>
<div class="abs" style="left:690px;top:863px;width:56px;height:2px;background:#f2f2f2"></div>
<div class="abs" style="left:1356px;top:864px;width:8px;height:1px;background:#5a5a5a"></div>
<div class="abs" style="left:1372px;top:864px;width:8px;height:1px;background:#5a5a5a"></div>
<div class="abs" style="left:1388px;top:864px;width:8px;height:1px;background:#5a5a5a"></div>
<!--/CHROME-->
<div id="dialog"></div>
<div id="dlgbody"></div>
<!-- dialog title -->
<div class="t" id="dlgtitle" style="left:579px;top:95px;width:200px;text-align:center;font-weight:bold;color:#3c3c3c;font-size:12.5px;letter-spacing:0.145px">New Document</div>
<svg class="abs" style="left:1012px;top:98px" width="11" height="9" viewBox="0 0 11 9"><path d="M1.5 7 L5.5 2.5 L9.5 7" fill="none" stroke="#2e2e2e" stroke-width="2.2"/></svg>
<svg class="abs" style="left:1035px;top:97px" width="11" height="11" viewBox="0 0 11 11"><path d="M1.5 1.5 L9.5 9.5 M9.5 1.5 L1.5 9.5" fill="none" stroke="#2e2e2e" stroke-width="2.2"/></svg>

<!-- outer tab pane -->
<div class="abs" id="pane" style="left:338px;top:153px;width:704px;height:472px;background:#fbfbfb;border:1px solid #b8b8b8"></div>
<div class="abs tab" style="left:457px;top:127px;width:145px;height:26px"></div>
<div class="abs tab" style="left:601px;top:127px;width:177px;height:26px"></div>
<div class="abs tab" style="left:777px;top:127px;width:170px;height:26px"></div>
<div class="abs tabsel" style="left:338px;top:125px;width:120px;height:29px"></div>
<div class="t" id="tb1" style="left:350px;top:133px;letter-spacing:0.12px"><u>N</u>ew Document</div>
<div class="t" id="tb2" style="left:469px;top:134px;letter-spacing:0.188px">New <u>f</u>rom Template</div>
<div class="t" id="tb3" style="left:613px;top:134px;letter-spacing:0.06px">Open <u>E</u>xisting Document</div>
<div class="t" id="tb4" style="left:789px;top:134px">Open Recent <u>D</u>ocument</div>

<!-- Document layout group -->
<div class="t" id="lbDL" style="left:349px;top:167px;letter-spacing:0.107px">Document Layout</div>
<div class="abs grp" style="left:350px;top:186px;width:681px;height:179px"></div>
<div class="abs" id="list" style="left:361px;top:197px;width:426px;height:156px;background:#fff;border:1px solid #a8a8a8"></div>
<div class="abs" style="left:376px;top:205px;width:26px;height:30px;background:linear-gradient(135deg,#bad7e6,#b0cfe0 60%,#b8d5e4);border:1px solid #7298a8;border-top-color:#668a98;border-radius:1px"></div>
<div class="abs" style="left:367px;top:238px;width:44px;height:36px;background:#308cc6"></div>
<div class="t" id="lbS1" style="left:367px;top:240px;width:44px;text-align:center;color:#fff">Single</div>
<div class="t" id="lbS2" style="left:367px;top:258px;width:44px;text-align:center;color:#fff;letter-spacing:-0.333px">Page</div>
<svg class="abs" style="left:423px;top:204px" width="31" height="32" viewBox="0 0 31 32"><defs><linearGradient id="fpg" x1="0" x2="1"><stop offset="0" stop-color="#fbfbfb"/><stop offset="0.5" stop-color="#f0f0f0"/><stop offset="0.52" stop-color="#fafafa"/><stop offset="1" stop-color="#f1f1f1"/></linearGradient></defs><path d="M1.5 1.5 L15.5 4.8 L29.5 1.5 L29.5 27.3 L15.5 30.5 L1.5 27.3 Z" fill="url(#fpg)" stroke="#7e7e7e" stroke-width="1"/><path d="M15.5 5.5 V30" stroke="#a8a8a8" stroke-width="1" stroke-dasharray="1 1.4"/></svg>
<div class="t" id="lbF1" style="left:417px;top:240px;width:44px;text-align:center;letter-spacing:-0.2px">Facing</div>
<div class="t" id="lbF2" style="left:417px;top:258px;width:44px;text-align:center;letter-spacing:-0.5px">Pages</div>

<div class="t" id="lbSize" style="left:793px;top:203px;letter-spacing:-0.7px"><u>S</u>ize:</div>
<div class="t" id="lbOri" style="left:793px;top:235px;letter-spacing:0.327px">Orie<u>n</u>tation:</div>
<div class="t" id="lbWid" style="left:793px;top:268px"><u>W</u>idth:</div>
<div class="t" id="lbHei" style="left:793px;top:301px;letter-spacing:0.317px"><u>H</u>eight:</div>
<div class="t" id="lbDU" style="left:793px;top:333px;letter-spacing:0.183px"><u>D</u>efault Unit:</div>
<div class="combo" style="left:877px;top:197px;width:142px"><div class="arr"></div></div>
<div class="t" id="cbSize" style="left:882px;top:203px">Custom</div>
<div class="combo" style="left:877px;top:229px;width:142px"><div class="arr"></div></div>
<div class="t" id="cbOri" style="left:882px;top:235px;letter-spacing:0.186px">Portrait</div>
<div class="spin focus" style="left:877px;top:262px;width:142px"><div class="sb"></div><div class="up"></div><div class="dn"></div></div>
<div class="t" id="spW" style="left:883px;top:268px;letter-spacing:-0.291px">1000.0000 cm</div>
<div class="abs" style="left:967px;top:266px;width:1px;height:17px;background:#111"></div>
<div class="spin" style="left:877px;top:295px;width:142px"><div class="sb"></div><div class="up"></div><div class="dn"></div></div>
<div class="t" id="spH" style="left:883px;top:301px;letter-spacing:-0.2px">1000.0000 cm</div>
<div class="combo" style="left:877px;top:327px;width:142px"><div class="arr"></div></div>
<div class="t" id="cbDU" style="left:882px;top:333px">Centimeters (cm)</div>

<!-- Margin guides tabs -->
<div class="abs" style="left:349px;top:399px;width:385px;height:215px;background:#fbfbfb;border:1px solid #b8b8b8"></div>
<div class="abs tab" style="left:463px;top:373px;width:65px;height:26px"></div>
<div class="abs tabsel" style="left:349px;top:371px;width:115px;height:29px"></div>
<div class="t" id="tbMG" style="left:362px;top:379px">Margin Guides</div>
<div class="t" id="tbBl" style="left:475px;top:380px;letter-spacing:-0.2px">Bleeds</div>
<div class="t" id="lbPL" style="left:360px;top:416px;letter-spacing:-0.071px">Preset Layouts:</div>
<div class="t" id="lbL" style="left:360px;top:449px"><u>L</u>eft:</div>
<div class="t" id="lbR" style="left:360px;top:482px"><u>R</u>ight:</div>
<div class="t" id="lbT" style="left:360px;top:515px;letter-spacing:0.333px"><u>T</u>op:</div>
<div class="t" id="lbB" style="left:360px;top:548px;letter-spacing:0.375px"><u>B</u>ottom:</div>
<div class="combo dcombo" style="left:534px;top:410px;width:168px"><div class="arr"></div></div>
<div class="t dis" id="cbNone" style="left:539px;top:416px">None</div>
<div class="spin" style="left:534px;top:443px;width:168px"><div class="sb"></div><div class="up"></div><div class="dn"></div></div>
<div class="t" id="spL" style="left:540px;top:449px;letter-spacing:-0.188px">1.4112 cm</div>
<div class="spin" style="left:534px;top:476px;width:168px"><div class="sb"></div><div class="up"></div><div class="dn"></div></div>
<div class="t" id="spR" style="left:540px;top:482px;letter-spacing:-0.188px">1.4112 cm</div>
<div class="spin" style="left:534px;top:509px;width:168px"><div class="sb"></div><div class="up"></div><div class="dn"></div></div>
<div class="t" id="spT" style="left:540px;top:515px;letter-spacing:-0.188px">1.4112 cm</div>
<div class="spin" style="left:534px;top:542px;width:168px"><div class="sb"></div><div class="up"></div><div class="dn"></div></div>
<div class="t" id="spB" style="left:540px;top:548px;letter-spacing:-0.188px">1.4112 cm</div>
<div class="btn" style="left:534px;top:574px;width:168px;height:26px"></div>
<div class="t" id="btPM" style="left:534px;top:580px;width:168px;text-align:center;letter-spacing:0.176px">Printer Margins...</div>
<svg class="abs" id="link" style="left:710px;top:483px" width="12" height="46" viewBox="0 0 12 46"><path d="M1.2 2 H6.4 V6.8 M1.2 42.8 H6.4 V37.4" fill="none" stroke="#1c1c1c" stroke-width="1.8"/><rect x="3.1" y="10.2" width="5" height="8.8" fill="none" stroke="#1c1c1c" stroke-width="1.8"/><rect x="3.1" y="25.1" width="5" height="8.8" fill="none" stroke="#1c1c1c" stroke-width="1.8"/></svg>

<!-- Options -->
<div class="t" id="lbOpt" style="left:740px;top:374px">Options</div>
<div class="abs grp" style="left:741px;top:393px;width:290px;height:222px"></div>
<div class="t" id="lbNP" style="left:752px;top:411px;letter-spacing:0.073px">N<u>u</u>mber of Pages:</div>
<div class="spin" style="left:889px;top:405px;width:130px"><div class="sb"></div><div class="up"></div><div class="dn"></div></div>
<div class="t" id="spNP" style="left:894px;top:411px">1</div>
<div class="t" id="lbFP" style="left:752px;top:443px;letter-spacing:-0.169px">First Page is:</div>
<div class="combo dcombo" style="left:889px;top:437px;width:130px"><div class="arr"></div></div>
<div class="cb" style="left:752px;top:474px"></div>
<div class="t" id="lbATF" style="left:771px;top:474px"><u>A</u>utomatic Text Frames</div>
<div class="t dis" id="lbCol" style="left:752px;top:506px">Colu<u>m</u>ns:</div>
<div class="spin dspin" style="left:889px;top:500px;width:130px"><div class="sb"></div><div class="up"></div><div class="dn"></div></div>
<div class="t dis" id="spCol" style="left:894px;top:506px">1</div>
<div class="t dis" id="lbGap" style="left:752px;top:539px;letter-spacing:-0.3px"><u>G</u>ap:</div>
<div class="spin dspin" style="left:889px;top:533px;width:130px"><div class="sb"></div><div class="up"></div><div class="dn"></div></div>
<div class="t dis" id="spGap" style="left:894px;top:539px;letter-spacing:-0.163px">0.3881 cm</div>
<div class="cb" style="left:752px;top:570px"></div>
<div class="t" id="lbSDS" style="left:771px;top:570px;letter-spacing:0.078px">Show Document Settings After Creation</div>

<!-- bottom row -->
<div class="cb" style="left:338px;top:638px"></div>
<div class="t" id="lbDNS" style="left:357px;top:638px;letter-spacing:0.143px">Do not show this dialog again</div>
<div class="btn" style="left:876px;top:632px;width:80px;height:26px"></div>
<div class="t" id="btCan" style="left:876px;top:638px;width:80px;text-align:center;letter-spacing:-0.46px"><u>C</u>ancel</div>
<div class="btn okbtn" style="left:962px;top:632px;width:80px;height:26px"></div>
<div class="t" id="btOK" style="left:961px;top:638px;width:80px;text-align:center;letter-spacing:-0.7px;font-size:13.2px"><u>O</u>K</div>

</body></html>
